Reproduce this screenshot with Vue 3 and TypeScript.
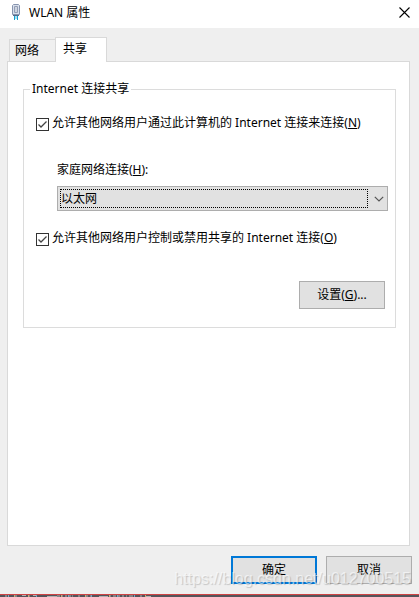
<script setup lang="ts">
import { ref } from 'vue'

const tabs = ['网络', '共享']
const activeTab = ref('共享')
const allowConnect = ref(true)
const allowControl = ref(true)
const connection = ref('以太网')
</script>

<template>
  <div class="window">
    <header class="titlebar">
      <svg class="app-icon" width="10" height="16" viewBox="0 0 10 16" aria-hidden="true">
        <path d="M2.5 .5h5l1 1v9h-7v-9z" fill="#d8dfeb" stroke="#8794ae" />
        <path d="M3.5 2.5h3v6h-3z" fill="#f3f6fb" stroke="#929db4" />
        <path d="M5 3v5" stroke="#a9b3c6" />
        <path d="M2 11h6v1H2z" fill="#526d8d" />
        <path d="M3.5 12v4M6.5 12v4" stroke="#149fd0" />
        <path d="M4.5 12v3M5.5 12v3" stroke="#a5e1f2" />
      </svg>
      <h1 class="title">WLAN 属性</h1>
      <button class="close" type="button" aria-label="关闭">
        <svg width="11" height="11" viewBox="0 0 11 11" aria-hidden="true">
          <path d="M.5 .5l10 10M10.5 .5l-10 10" stroke="#000" stroke-width="1.1" fill="none" />
        </svg>
      </button>
    </header>

    <main class="body">
      <div class="tabs" role="tablist">
        <button
          v-for="tab in tabs"
          :key="tab"
          class="tab"
          :class="{ active: tab === activeTab }"
          type="button"
          role="tab"
          :aria-selected="tab === activeTab"
          @click="activeTab = tab"
        >{{ tab }}</button>
      </div>

      <section class="panel">
        <fieldset class="group">
          <legend>Internet 连接共享</legend>
          <label class="check">
            <input v-model="allowConnect" type="checkbox" />
            <span>允许其他网络用户通过此计算机的 Internet 连接来连接(<u>N</u>)</span>
          </label>
          <div class="home">
            <label for="home-connection">家庭网络连接(<u>H</u>):</label>
            <div class="combo">
              <select id="home-connection" v-model="connection">
                <option>以太网</option>
              </select>
              <span class="focus-ring"></span>
              <svg class="chevron" width="10" height="6" viewBox="0 0 10 6" aria-hidden="true">
                <path d="M.8 .8L5 5L9.200 .8" stroke="#555" stroke-width="1.2" fill="none" />
              </svg>
            </div>
          </div>
          <label class="check">
            <input v-model="allowControl" type="checkbox" />
            <span>允许其他网络用户控制或禁用共享的 Internet 连接(<u>O</u>)</span>
          </label>
          <div class="settings">
            <button class="btn" type="button">设置(<u>G</u>)...</button>
          </div>
        </fieldset>
      </section>
    </main>

    <footer class="actions">
      <button class="btn primary" type="button">确定</button>
      <button class="btn" type="button">取消</button>
      <span class="watermark">https://blog.csdn.net/u012700515</span>
    </footer>

    <div class="edge">
      <svg width="152" height="2" viewBox="0 0 152 2" aria-hidden="true">
        <path
          d="M5 1h2M15 1h2M22 .5h4M29 1h1M33 .5h3M47 1.500h10M57 1h3M62 1h1M65 1h2M69 1h2M72 1h1M78 1h2M86 1h2M90 1h1M99 1.500h9M110 1h1M113 1h3M118 1h2M122 1h2M126 1h1M129 1h4M140 1h2M146 1.500h5"
          stroke="#b5b2b2"
          stroke-width="1"
        />
        <path d="M8 1h1M36 1h1M68 1h1M91 1h1M117 1h1M134 1h1" stroke="#76a7c8" stroke-width="2" />
        <path d="M14 1h1M28 1h1M61 1h1M85 1h1M109 1h1M145 1h1" stroke="#c7ae79" stroke-width="2" />
      </svg>
    </div>
  </div>
</template>

<style>
body {
  margin: 0;
}
</style>

<style scoped>
.window {
  display: flex;
  flex-direction: column;
  min-height: 100vh;
  background: #efefef;
  color: #000;
  font: 12px/16px "Noto Sans", "Noto Sans CJK SC", sans-serif;
}

button,
select {
  font: inherit;
  color: inherit;
}

u {
  text-underline-offset: 1px;
}

.titlebar {
  display: flex;
  align-items: center;
  height: 28px;
  padding: 0 9px 0 11px;
  box-sizing: border-box;
  background: #fff;
}

.app-icon {
  margin-bottom: 4px;
}

.title {
  flex: 1;
  margin: 0 0 2px 8px;
  font-size: 12px;
  font-weight: 400;
}

.close {
  display: flex;
  margin-bottom: 4px;
  padding: 0;
  border: 0;
  background: none;
}

.body {
  display: flex;
  flex: 1;
  flex-direction: column;
  padding: 9px 9px 0 7px;
}

.tabs {
  display: flex;
  align-items: flex-end;
  padding-left: 2px;
}

.tab {
  height: 22px;
  padding: 0 16px 0 5px;
  border: 1px solid #d9d9d9;
  border-width: 1px 0 0 1px;
  background: #f0f0f0;
}

.tab.active {
  height: 25px;
  margin-bottom: -1px;
  padding: 0 19px 2px 7px;
  border-width: 1px 1px 0;
  background: #fff;
  z-index: 1;
}

.panel {
  flex: 1;
  padding: 19px 13px 0 15px;
  border: 1px solid #d9d9d9;
  background: #fff;
}

.group {
  min-width: 0;
  margin: 0;
  padding: 18px 7px 18px 12px;
  border: 1px solid #dcdcdc;
}

.group legend {
  margin-left: -6px;
  padding: 0 2px;
}

.check {
  display: flex;
  align-items: center;
  gap: 3px;
  white-space: nowrap;
}

.check input {
  flex: none;
  width: 13px;
  height: 13px;
  margin: 3px 0 0;
  border: 1px solid #333;
  appearance: none;
  background: #fff;
}

.check input:checked {
  background: #fff url("data:image/svg+xml,%3Csvg xmlns='http://www.w3.org/2000/svg' viewBox='0 0 11 11'%3E%3Cpath d='M1.500 5.500L4 8L9.500 2.500' fill='none' stroke='%23444' stroke-width='1.300'/%3E%3C/svg%3E");
}

.home {
  margin: 31px 0 19px;
  padding-left: 21px;
}

.home label {
  display: block;
  margin-bottom: 8px;
}

.combo {
  position: relative;
}

.combo select {
  display: block;
  width: 100%;
  height: 25px;
  padding: 0 24px 0 3px;
  border: 1px solid #adadad;
  border-radius: 0;
  appearance: none;
  background: #e1e1e1;
}

.focus-ring {
  position: absolute;
  inset: 3px 20px 3px 3px;
  border: 1px dotted #000;
  pointer-events: none;
}

.chevron {
  position: absolute;
  top: 10px;
  right: 4px;
  pointer-events: none;
}

.settings {
  display: flex;
  justify-content: flex-end;
  margin-top: 35px;
  padding-right: 3px;
}

.btn {
  width: 86px;
  height: 28px;
  padding: 0;
  border: 1px solid #adadad;
  background: #e1e1e1;
}

.btn.primary {
  border: 2px solid #0078d7;
}

.actions {
  position: relative;
  display: flex;
  justify-content: flex-end;
  gap: 9px;
  padding: 10px 7px;
}

.watermark {
  position: absolute;
  right: 8px;
  bottom: 5px;
  color: rgba(255, 255, 255, 0.6);
  font: 16px/20px "Liberation Sans", sans-serif;
  text-shadow: 1px 1px 1px rgba(0, 0, 0, 0.18);
  pointer-events: none;
}

.edge {
  display: flex;
  height: 2px;
  border-top: 1px solid #cf4444;
  background: #55545a;
}
</style>
